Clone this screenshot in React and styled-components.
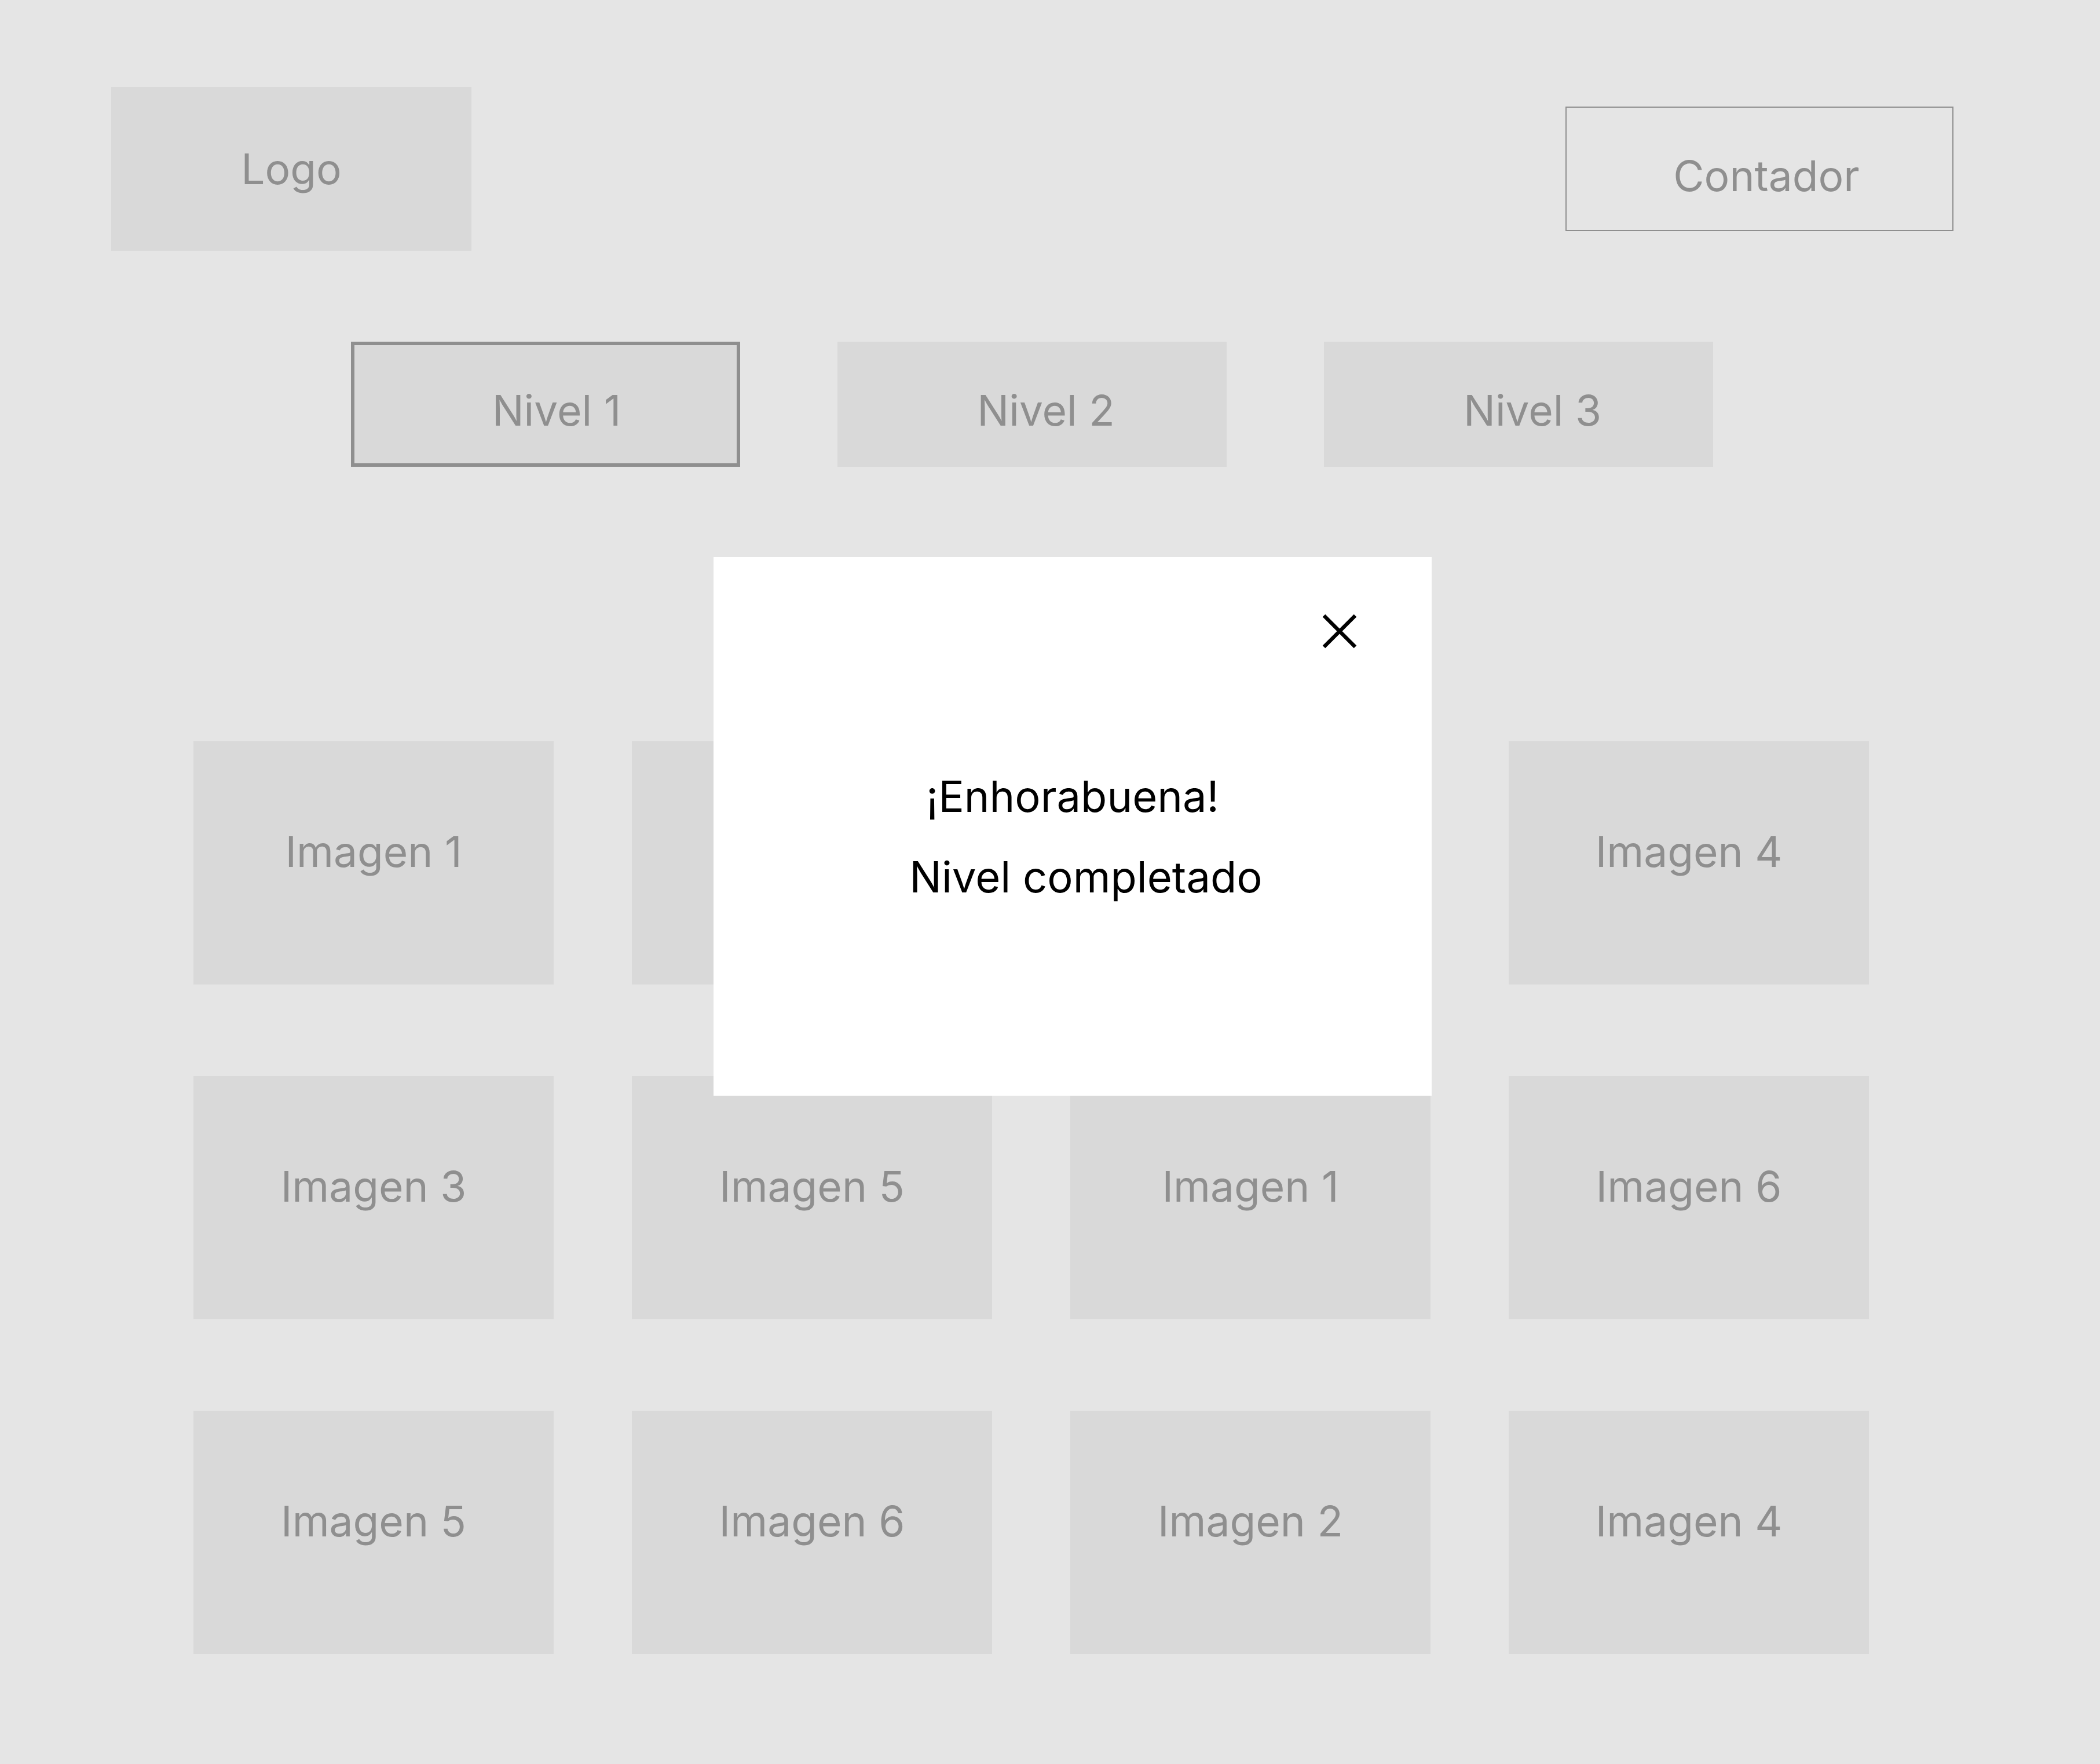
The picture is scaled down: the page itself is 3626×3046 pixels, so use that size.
import styled, { createGlobalStyle } from "styled-components";

const GlobalStyle = createGlobalStyle`
  html, body {
    margin: 0;
    padding: 0;
    background: #e5e5e5;
  }
  body {
    font-family: Inter, "Noto Sans", "Liberation Sans", sans-serif;
  }
`;

const levels = ["Nivel 1", "Nivel 2", "Nivel 3"];

const cards = [
  "Imagen 1", "Imagen 2", "Imagen 3", "Imagen 4",
  "Imagen 3", "Imagen 5", "Imagen 1", "Imagen 6",
  "Imagen 5", "Imagen 6", "Imagen 2", "Imagen 4",
];

function CloseIcon() {
  return (
    <svg width="60" height="60" viewBox="0 0 60 60" fill="none">
      <path d="M3 3 L57 57 M57 3 L3 57" stroke="#000" strokeWidth="6.5" />
    </svg>
  );
}

export default function App() {
  return (
    <MainBody>
      <GlobalStyle />
      <Header>
        <Logo>Logo</Logo>
        <Counter>Contador</Counter>
      </Header>

      <Levels>
        {levels.map((name, i) => (
          <LevelButton key={name} $active={i === 0}>
            {name}
          </LevelButton>
        ))}
      </Levels>

      <Board>
        {cards.map((label, i) => (
          <Card key={i}>{label}</Card>
        ))}
      </Board>

      <Modal>
        <CloseButton aria-label="Cerrar">
          <CloseIcon />
        </CloseButton>
        <Message>¡Enhorabuena!</Message>
        <Message $shift={46}>Nivel completado</Message>
      </Modal>
    </MainBody>
  );
}

const MainBody = styled.div`
  position: relative;
  width: 3626px;
  min-height: 3046px;
  background: #e5e5e5;
  box-sizing: border-box;
  padding-top: 150px;
  overflow: hidden;
`;

const Label = styled.div`
  display: flex;
  align-items: center;
  justify-content: center;
  box-sizing: border-box;
  background: #d9d9d9;
  color: #8f8f8f;
  font-size: 73px;
  line-height: 1;
  white-space: nowrap;
`;

const Header = styled.header`
  display: flex;
  justify-content: space-between;
  align-items: flex-start;
  padding: 0 253px 0 192px;
`;

const Logo = styled(Label)`
  width: 622px;
  height: 283px;
`;

const Counter = styled(Label)`
  width: 670px;
  height: 215px;
  margin-top: 34px;
  background: transparent;
  border: 2px solid #8f8f8f;
  padding: 24px 0 0 24px;
`;

const Levels = styled.nav`
  display: flex;
  gap: 168px;
  margin: 157px 0 0 606px;
`;

const LevelButton = styled(Label)`
  width: 672px;
  height: 216px;
  padding: 20px 0 0 ${(p) => (p.$active ? 38 : 48)}px;
  border: ${(p) => (p.$active ? "6px solid #8f8f8f" : "none")};
`;

const Board = styled.section`
  display: grid;
  grid-template-columns: repeat(4, 622px);
  grid-auto-rows: 420px;
  column-gap: 135px;
  row-gap: 158px;
  margin: 474px 0 0 334px;
`;

const Card = styled(Label)`
  padding-bottom: 40px;
`;

const Modal = styled.div`
  position: absolute;
  left: 1232px;
  top: 962px;
  width: 1240px;
  height: 930px;
  background: #ffffff;
  display: flex;
  flex-direction: column;
  align-items: center;
  gap: 65px;
  padding-top: 376px;
  box-sizing: border-box;
`;

const CloseButton = styled.button`
  position: absolute;
  top: 98px;
  right: 129px;
  width: 60px;
  height: 60px;
  padding: 0;
  border: none;
  background: none;
  display: flex;
  cursor: pointer;
`;

const Message = styled.p`
  margin: 0;
  color: #000;
  font-size: 74px;
  line-height: 1;
  padding-left: ${(p) => p.$shift || 0}px;
`;
